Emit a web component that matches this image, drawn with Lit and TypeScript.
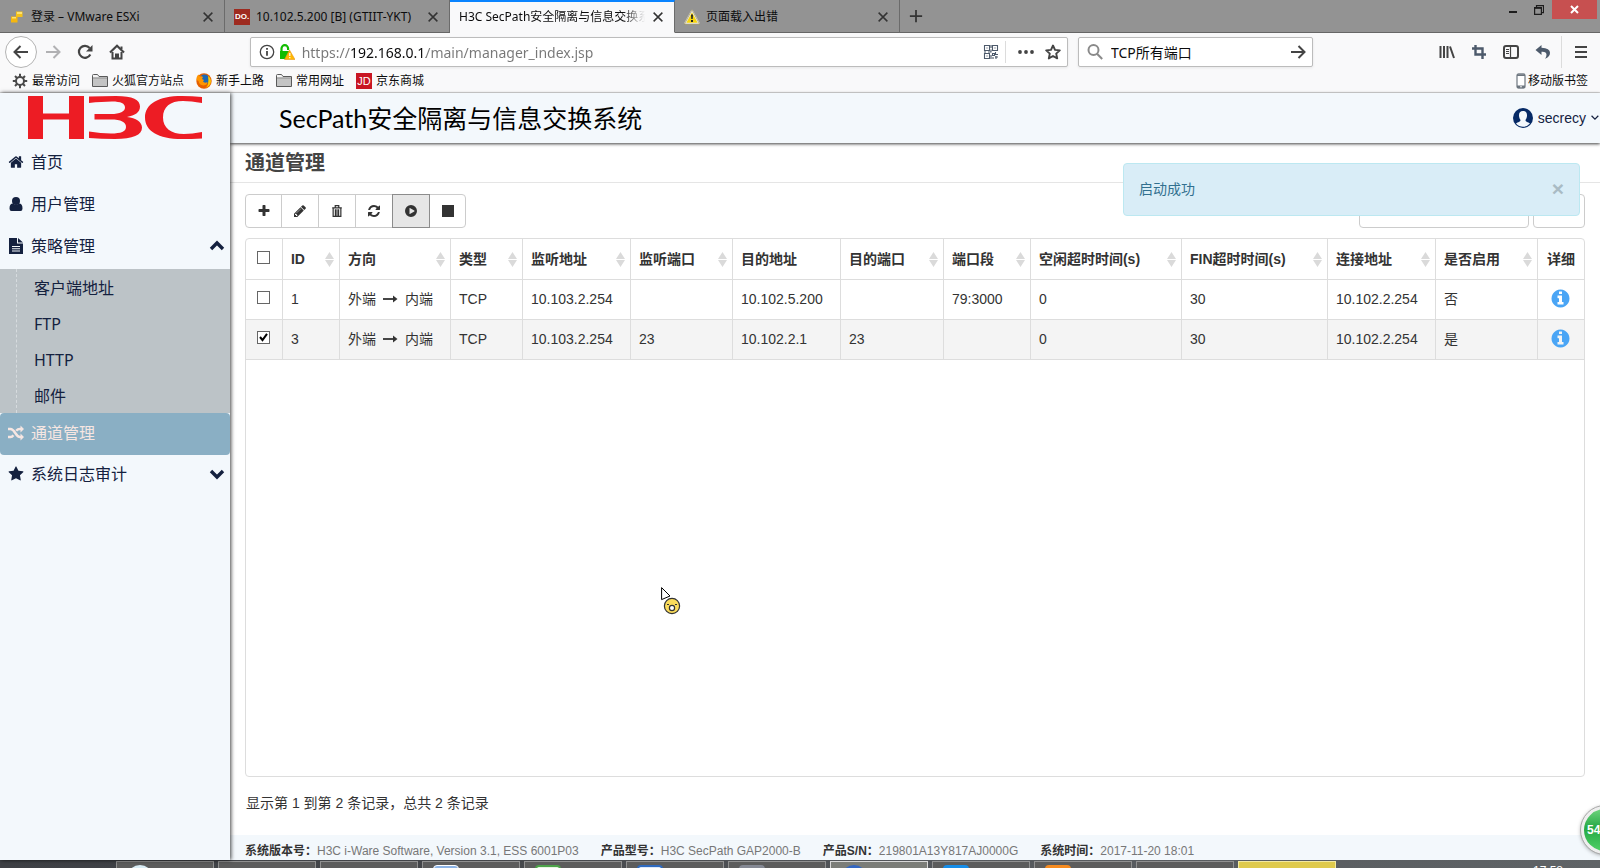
import { LitElement, html, css, svg } from "lit";
import { customElement, state } from "lit/decorators.js";
import { classMap } from "lit/directives/class-map.js";

const fa = (d: string) => html`<svg class="ico" viewBox="0 0 1792 1792" fill="currentColor" aria-hidden="true"><path d=${d}></path></svg>`;
const line = (body: unknown, box = "0 0 16 16") =>
  html`<svg class="ico" viewBox=${box} fill="none" stroke="currentColor" stroke-width="2" aria-hidden="true">${body}</svg>`;

const icons = {
  home: fa("M1472 992v480q0 26-19 45t-45 19h-384v-384h-256v384h-384q-26 0-45-19t-19-45v-480q0-1 .5-3t.5-3l575-474 575 474q1 2 1 6zm223-69l-62 74q-8 9-21 11h-3q-13 0-21-7l-692-577-692 577q-12 8-24 7-13-2-21-11l-62-74q-8-10-7-23.500t11-21.500l719-599q32-26 76-26t76 26l244 204v-195q0-14 9-23t23-9h192q14 0 23 9t9 23v408l219 182q10 8 11 21.500t-7 23.500z"),
  star: fa("M1728 647q0 22-26 48l-363 354 86 500q1 7 1 20 0 21-10.500 35.500t-30.500 14.500q-19 0-40-12l-449-236-449 236q-22 12-40 12-21 0-31.500-14.500t-10.500-35.500q0-6 2-20l86-500-364-354q-25-27-25-48 0-37 56-46l502-73 225-455q19-41 49-41t49 41l225 455 502 73q56 9 56 46z"),
  info: fa("M1152 1376v-160q0-14-9-23t-23-9h-96v-512q0-14-9-23t-23-9h-320q-14 0-23 9t-9 23v160q0 14 9 23t23 9h96v320h-96q-14 0-23 9t-9 23v160q0 14 9 23t23 9h448q14 0 23-9t9-23zm-128-896v-160q0-14-9-23t-23-9h-192q-14 0-23 9t-9 23v160q0 14 9 23t23 9h192q14 0 23-9t9-23zm640 416q0 209-103 385.500t-279.500 279.500-385.500 103-385.500-103-279.500-279.500-103-385.500 103-385.500 279.500-279.500 385.500-103 385.500 103 279.500 279.500 103 385.500z"),
  plus: fa("M1600 736v192q0 40-28 68t-68 28h-416v416q0 40-28 68t-68 28H800q-40 0-68-28t-28-68v-416H288q-40 0-68-28t-28-68V736q0-40 28-68t68-28h416V224q0-40 28-68t68-28h192q40 0 68 28t28 68v416h416q40 0 68 28t28 68z"),
  pencil: fa("M491 1536l91-91-235-235-91 91v107h128v128h107zm523-928q0-22-22-22-10 0-17 7l-542 542q-7 7-7 17 0 22 22 22 10 0 17-7l542-542q7-7 7-17zm-54-192l416 416-832 832h-416v-416zm683 96q0 53-37 90l-166 166-416-416 166-165q36-38 90-38 53 0 91 38l235 234q37 39 37 91z"),
  refresh: fa("M1639 1056q0 5-1 7-64 268-268 434.500t-478 166.500q-146 0-282.500-55t-243.500-157l-129 129q-19 19-45 19t-45-19-19-45v-448q0-26 19-45t45-19h448q26 0 45 19t19 45-19 45l-137 137q71 66 161 102t187 36q134 0 250-65t186-179q11-17 53-117 8-23 30-23h192q13 0 22.500 9.500t9.500 22.500zm25-800v448q0 26-19 45t-45 19h-448q-26 0-45-19t-19-45 19-45l138-138q-148-137-349-137-134 0-250 65t-186 179q-11 17-53 117-8 23-30 23h-199q-13 0-22.500-9.500t-9.500-22.500v-7q65-268 270-434.500t480-166.500q146 0 284 55.500t245 156.500l130-129q19-19 45-19t45 19 19 45z"),
  play: fa("M896 128a768 768 0 1 0 0 1536a768 768 0 1 0 0-1536zM704 544q0-52 48-30l560 326q32 20 32 56t-32 56l-560 326q-48 22-48-30z"),
  stop: fa("M128 128h1536v1536h-1536z"),
  user: line(svg`<circle cx="8" cy="5" r="4" fill="currentColor" stroke="none"/><path d="M1.500 12.500q0-5 3.500-5 3 2.500 6 0 3.500 0 3.500 5 0 2.500-2 2.500h-9q-2 0-2-2.500z" fill="currentColor" stroke="none"/>`),
  file: line(svg`<path d="M1 0h8v5.500h6V16H1zM10 0l5 4.500h-5zM4 8v1h8V8zM4 10.300v1h8v-1zM4 12.600v1h8v-1z" fill="currentColor" fill-rule="evenodd" stroke="none"/>`),
  shuffle: line(svg`<path d="M0 4h2.500C7 4 7.500 12 12 12h1M0 12h2.500q1.700 0 2.900-1.700M8.200 5.700Q9.600 4 12 4h1" stroke-width="2.400"/><path d="M12.500 .5L16 4l-3.500 3.500zM12.500 8.500L16 12l-3.500 3.500z" fill="currentColor" stroke="none"/>`),
  up: line(svg`<path d="M2 11l6-6 6 6" stroke-width="3.400"/>`),
  down: line(svg`<path d="M2 5l6 6 6-6" stroke-width="3.400"/>`),
  trash: line(svg`<path d="M2.500 4.500h11M6 4V1.800h4V4M3.600 5v9.200h8.800V5M6.200 6v7.500M8 6v7.500M9.800 6v7.500" stroke-width="1.400"/>`),
  arrow: line(svg`<path d="M0 7h11" stroke-width="1.800"/><path d="M10 3.500l4.500 3.500-4.500 3.500z" fill="currentColor" stroke="none"/>`, "0 0 15 14"),
  close: line(svg`<path d="M3 3l10 10M13 3L3 13" stroke-width="1.700"/>`),
  newTab: line(svg`<path d="M8 1v14M1 8h14"/>`),
  back: line(svg`<path d="M15 8H2M7.500 2L1.500 8l6 6"/>`),
  forward: line(svg`<path d="M1 8h13M8.500 2l6 6-6 6"/>`),
  reload: line(svg`<path d="M13.300 10.500A6 6 0 1 1 12.600 4" stroke-width="2.200"/><path d="M15.500 1v6.500H9z" fill="currentColor" stroke="none"/>`),
  house: line(svg`<path d="M1 8.500L8 1.800l7 6.700" stroke-width="2.200"/><path d="M3.500 8v6.500h9V8M7 14.500v-4h2v4M12.500 5V2.500" stroke-width="2"/>`),
  infoRing: line(svg`<circle cx="8" cy="8" r="6.700" stroke-width="1.300"/><path d="M8 7v4.800M8 4v1.800" stroke-width="1.800"/>`),
  lock: html`<svg class="ico" viewBox="0 0 16 16" aria-hidden="true"><path d="M2.500 8V4.500a3.300 3.300 0 0 1 6.600 0V6" fill="none" stroke="#12bc00" stroke-width="2.200"/><path d="M1 7h9v8H1z" fill="#12bc00"/><path d="M10.500 6L16 15.500H5.500z" fill="#ffb800" stroke="#e8941a" stroke-width=".6"/><path d="M10.200 9h1.200v3h-1.200zM10.200 13h1.200v1.300h-1.200z" fill="#fff"/></svg>`,
  qr: line(svg`<path d="M1.500 1.500h5v5h-5zM9.500 1.500h5v5h-5zM1.500 9.500h5v5h-5zM4 3.500v1M12 3.500v1M4 11.500v1M8 1v3M8 5.500V8H5M1 8h2M9.500 9.500h2v2h-2zM12.500 8v2.500h2.500M13 12v3M10 13v2M12 13h3M8 11v4" stroke-width="1.100"/>`),
  dots: line(svg`<circle cx="2" cy="8" r="1.900" fill="currentColor" stroke="none"/><circle cx="8" cy="8" r="1.900" fill="currentColor" stroke="none"/><circle cx="14" cy="8" r="1.900" fill="currentColor" stroke="none"/>`),
  starRing: line(svg`<path d="M8 1.500l2 4.400 4.800.5-3.600 3.200 1 4.800L8 12l-4.200 2.400 1-4.800L1.200 6.400 6 5.900z" stroke-linejoin="round" stroke-width="1.900"/>`),
  magnifier: line(svg`<circle cx="6.500" cy="6" r="5"/><path d="M10 9.800l5.200 5.200"/>`),
  library: line(svg`<path d="M1.500 2v12M5 2v12M8.500 2v12M11 2.500l4 11.500"/>`),
  crop: line(svg`<path d="M4.500 1v9.500H15M1 4.500h10.500V15" stroke-width="2.400"/>`),
  panel: line(svg`<rect x="1" y="2" width="14" height="12" rx="2"/><path d="M7.500 2v12M3 5.500h3M3 7.500h3M3 9.500h3" stroke-width="1.200"/>`),
  undo: line(svg`<path d="M6.500 1L.5 6l6 5V7.800q5-.4 5 3 0 2-1.500 4 5-1.800 5-6 0-4.600-8.500-5z" fill="currentColor" stroke="none"/>`),
  menu: line(svg`<path d="M2 3h12M2 8h12M2 13h12"/>`),
  gear: line(svg`<circle cx="8" cy="8" r="4"/><path d="M8 4V.8M8 12v3.200M4 8H.8M12 8h3.200M5.200 5.200L3 3M10.800 10.800L13 13M5.200 10.800L3 13M10.800 5.200L13 3"/>`),
  folder: html`<svg class="ico" viewBox="0 0 16 16" aria-hidden="true"><path d="M.5 13.500v-11q0-1 1-1h4l1.500 2h8.500v10z" fill="#f4f4f4" stroke="#5a5a5a"/><path d="M1 5.500h14V13H1z" fill="#c4c4c4"/><path d="M1 5h14" stroke="#777"/></svg>`,
  fox: html`<svg class="ico" viewBox="0 0 16 16" aria-hidden="true"><circle cx="8" cy="8" r="7.700" fill="#e66000"/><circle cx="8.500" cy="6.500" r="5" fill="#1c69b5"/><path d="M.5 7Q.3 3.500 2.200 1.500L4 3.500q2-.6 3 .5L6 6l2 1-1 1.500q1.500 2 4.500.5 0 3-4 3.500Q3 12 2.500 8z" fill="#ff9500"/><path d="M12 3q4 3 2.500 7.500-1.500 3.500-5 4.500 4-3 2.500-12z" fill="#ffcb00"/></svg>`,
  vm: html`<svg class="ico" viewBox="0 0 16 16" aria-hidden="true"><path d="M7 2.500h6.500V8H7z" fill="#f5c21b"/><path d="M2 7.500h6.500v6H2z" fill="#f5b70f"/><path d="M8 3h5v2H8zM3 8h4v1.500H3z" fill="#ffe36e"/></svg>`,
  warn: html`<svg class="ico" viewBox="0 0 16 16" aria-hidden="true"><path d="M8 1.500L15 14.500H1z" fill="#f7d60c" stroke="#e9e9e9" stroke-width="1.600" stroke-linejoin="round"/><path d="M8 .8L15.600 15.200H.4z" fill="none" stroke="#8a7a2a" stroke-width=".5"/><path d="M7 5.500h2L8.700 10H7.300zM7 11h2v2H7z" fill="#222"/></svg>`,
  phone: html`<svg class="ico" viewBox="0 0 10 16" aria-hidden="true"><rect x="1" y="1" width="8" height="14" rx="1.500" fill="#fff" stroke="#7a828a" stroke-width="1.300"/><path d="M1 1.500h8V3H1zM1 12.500h8V15H1z" fill="#6c757e"/><circle cx="5" cy="13.800" r=".8" fill="#fff"/></svg>`,
  avatar: html`<svg class="ico" viewBox="0 0 20 20" aria-hidden="true"><circle cx="10" cy="10" r="10" fill="#062a66"/><path d="M10 3c3 0 4.200 2 4 5-.2 2-1 3-1.500 4 0 2 2.500 2 4.500 3.500Q14 18.800 10 18.800T3 15.500C5 14 7.500 14 7.500 12 7 11 6.200 10 6 8c-.2-3 1-5 4-5z" fill="#f3f8fc"/></svg>`,
  thin: line(svg`<path d="M1 5l6 6 6-6" stroke-width="2.200"/>`),
  minimize: line(svg`<path d="M1 7h8" stroke-width="2"/>`, "0 0 10 10"),
  restore: line(svg`<path d="M.6 2.600h6.800v6.800H.6zM2.500 2.500V.6h7v7H8" stroke-width="1.200"/><path d="M0 3h8" stroke-width="1.600"/>`, "0 0 10 10"),
  quit: line(svg`<path d="M1 1l7 7M8 1L1 8" stroke-width="2"/>`, "0 0 9 9"),
};

interface Row { id: number; type: string; listen: string; listenPort: string; target: string; targetPort: string; range: string; idle: string; fin: string; conn: string; on: string; checked: boolean; }

const columns: Array<[string, number, boolean]> = [
  ["ID", 57, true], ["方向", 111, true], ["类型", 72, true], ["监听地址", 108, true], ["监听端口", 102, true],
  ["目的地址", 108, false], ["目的端口", 103, true], ["端口段", 87, true], ["空闲超时时间(s)", 151, true],
  ["FIN超时时间(s)", 146, true], ["连接地址", 108, true], ["是否启用", 102, true], ["详细", 47, false],
];
const total = 1338;

@customElement("app-root")
export class AppRoot extends LitElement {
  @state() private rows: Row[] = [
    { id: 1, type: "TCP", listen: "10.103.2.254", listenPort: "", target: "10.102.5.200", targetPort: "", range: "79:3000", idle: "0", fin: "30", conn: "10.102.2.254", on: "否", checked: false },
    { id: 3, type: "TCP", listen: "10.103.2.254", listenPort: "23", target: "10.102.2.1", targetPort: "23", range: "", idle: "0", fin: "30", conn: "10.102.2.254", on: "是", checked: true },
  ];
  @state() private alertOpen = true;

  static styles = css`
    * { box-sizing: border-box; }
    :host { display: flex; flex-direction: column; position: relative; height: 100vh; overflow: hidden; background: #fff; color: #333; font: 14px/20px "Liberation Sans", "Noto Sans CJK SC", sans-serif; }
    button, input { font: inherit; color: inherit; margin: 0; padding: 0; border: 0; background: none; }
    button { display: inline-flex; align-items: center; justify-content: center; flex: none; }
    a { color: inherit; text-decoration: none; }
    .ico { display: block; flex: none; width: 16px; height: 16px; }
    .ui { font-family: "Noto Sans", "Noto Sans CJK SC", sans-serif; color: #0c0c0d; }

    .tabs { display: flex; flex: none; height: 33px; background: #939393; border-bottom: 1px solid #666; }
    .tab { display: flex; align-items: center; width: 225px; height: 33px; padding: 2px 9px 0 9px; border-right: 1px solid #6b6b6b; border-bottom: 1px solid #666; font-size: 12px; line-height: 20px; gap: 6px; }
    .tab .name { flex: 1; overflow: hidden; white-space: nowrap; }
    .tab button { color: #333; }
    .tab button .ico { width: 14px; height: 14px; }
    .tab.active { background: #f9f9fa; border-top: 2px solid #0a84ff; border-bottom-color: #f9f9fa; padding-top: 0; }
    .tab.active .name { mask-image: linear-gradient(90deg, #000 88%, transparent); }
    .do { width: 16px; height: 16px; background: #9e2b20; color: #fff; font: bold 8px/16px "Liberation Sans", sans-serif; text-align: center; }
    .add { width: 32px; color: #333; }
    .add .ico { width: 14px; height: 14px; }
    .win { display: flex; margin-left: auto; align-items: flex-start; color: #1d1d1d; }
    .win button { height: 19px; width: 26px; }
    .win .ico { width: 10px; height: 10px; }
    .win .quit { width: 45px; background: #c75050; color: #fff; margin-right: 3px; }
    .win .quit .ico { width: 9px; height: 9px; }

    .nav { display: flex; flex: none; align-items: center; height: 37px; padding: 0 3px 0 5px; background: #f9f9fa; color: #444; }
    .nav .back { width: 32px; height: 32px; border: 1px solid #b4b4b4; border-radius: 50%; background: #fff; }
    .nav .tool { width: 32px; height: 32px; }
    .dim { color: #b1b1b3; }
    .box { display: flex; align-items: center; height: 30px; margin-top: 1px; border: 1px solid #bcbcbc; border-radius: 2px; background: #fff; box-shadow: 0 1px 3px rgba(0, 0, 0, .08); }
    .url { flex: 1; margin-left: 117px; padding: 0 6px 0 8px; }
    .url input { flex: 1; min-width: 0; height: 26px; margin-left: 7px; font-size: 14px; color: transparent; background: linear-gradient(90deg, #777 48px, #0c0c0d 48px, #0c0c0d 124px, #777 124px); -webkit-background-clip: text; background-clip: text; }
    .url .sep { height: 22px; margin: 0 12px 0 6px; }
    .url .more { margin-right: 11px; }
    .sep { width: 1px; background: #dcdcdc; }
    .find { width: 235px; margin-left: 10px; margin-right: 118px; padding: 0 6px 0 8px; }
    .mag { color: #8a8a8a; }
    .find input { flex: 1; min-width: 0; margin-left: 8px; font-size: 14px; height: 26px; color: #0c0c0d; }
    .nav .sep.tall { height: 32px; margin: 0 3px 0 2px; }
    .nav .end { display: flex; align-items: center; }
    .slate { color: #4d5a6b; }

    .marks { display: flex; flex: none; align-items: center; height: 23px; padding: 0 12px; gap: 12px; background: #f9f9fa; border-bottom: 1px solid #dcdcdc; font-size: 12px; line-height: 20px; }
    .marks a { display: flex; align-items: center; gap: 4px; color: #0c0c0d; }
    .marks .ico { color: #4a4a4a; }
    .marks a:last-child { margin-left: auto; gap: 2px; }
    .marks a:last-child .ico { width: 10px; }
    .jd { width: 16px; height: 16px; background: #c91623; color: #fff; font: 11px/16px "Liberation Sans", sans-serif; text-align: center; }

    .page { display: flex; flex: 1; min-height: 0; }
    .side { position: relative; z-index: 2; flex: none; width: 230px; background: #f3f8fc; box-shadow: 1px 0 4px rgba(0, 0, 0, .75); font: 16px/36px "Noto Sans", "Noto Sans CJK SC", sans-serif; color: #14213f; }
    .logo { display: block; width: 174px; height: 43px; margin: 3px 0 4px 28px; }
    .item { display: flex; align-items: center; height: 42px; padding: 0 5px 4px 8px; gap: 7px; }
    .item.fold .ico:last-child { margin-left: auto; }
    .item.active { background: #8aafc4; color: #f6e6e2; border-radius: 4px; padding-bottom: 3px; }
    .sub { position: relative; background: #bcc3c7; }
    .sub::before { content: ""; position: absolute; inset: 0 auto 0 16px; border-left: 1px dashed #d6dbde; }
    .sub a { display: block; padding-left: 34px; height: 36px; padding-top: 1px; }

    .main { display: flex; flex-direction: column; flex: 1; min-width: 0; }
    .banner { position: relative; z-index: 1; display: flex; align-items: center; justify-content: space-between; flex: none; height: 50px; padding: 0 0 1px 49px; background: #f3f8fc; box-shadow: 0 1px 3px rgba(0, 0, 0, .75); }
    .banner h1 { margin: 0; font: 25px/36px "Lato", "Noto Sans CJK SC", sans-serif; font-weight: 400; color: #000; }
    .who { gap: 5px; color: #14213f; }
    .who .ico { width: 20px; height: 20px; }
    .who .ico:last-child { width: 9px; height: 9px; }
    .head { flex: none; height: 40px; padding: 5px 15px 0; border-bottom: 1px solid #e5e5e5; }
    .head h2 { margin: 0; font: bold 20px/30px "Liberation Sans", "Noto Sans CJK SC", sans-serif; color: #444; }
    .tools { display: flex; flex: none; justify-content: space-between; padding: 11px 15px 10px; }
    .group { display: flex; }
    .group button { width: 38px; height: 34px; margin-right: -1px; border: 1px solid #ccc; background: #fff; }
    .group button:first-child { border-radius: 4px 0 0 4px; width: 37px; }
    .group button:last-child { border-radius: 0 4px 4px 0; margin: 0; width: 37px; }
    .group .on { position: relative; background: #e6e6e6; border-color: #8c8c8c; }
    .group .ico { width: 14px; height: 14px; }
    .filter { display: flex; gap: 4px; }
    .filter input { width: 170px; height: 34px; border: 1px solid #ccc; border-radius: 4px; padding: 0 12px; }
    .filter button { width: 52px; height: 34px; border: 1px solid #ccc; border-radius: 4px; }
    .grid { flex: 1; min-height: 0; margin: 0 15px; border: 1px solid #ddd; border-radius: 4px; }
    table { width: 100%; table-layout: fixed; border-collapse: separate; border-spacing: 0; }
    th, td { height: 40px; padding: 0 8px 2px; text-align: left; border-bottom: 1px solid #ddd; border-left: 1px solid #ddd; white-space: nowrap; }
    th { height: 41px; padding-bottom: 0; font-weight: bold; }
    th:first-child, td:first-child { border-left: 0; padding: 0 0 4px 11px; }
    th:last-child, td:last-child { text-align: center; padding-left: 6px; padding-right: 6px; }
    td:last-child .ico { width: 21px; height: 21px; color: #4aa5f5; }
    td:last-child button { vertical-align: middle; }
    tr.picked td { background: #f4f4f4; }
    .cell { display: flex; align-items: center; justify-content: space-between; margin-right: -3px; }
    .sort { width: 9px; height: 15px; display: block; }
    .dir { display: flex; align-items: center; gap: 7px; }
    .dir .ico { width: 15px; height: 14px; }
    .tick { appearance: none; display: block; width: 13px; height: 13px; border: 1px solid #666; background: #fff; }
    .tick:checked { background: #fff url("data:image/svg+xml,%3Csvg xmlns='http://www.w3.org/2000/svg' viewBox='0 0 11 11'%3E%3Cpath d='M2 5l2.500 3L9 1.800' fill='none' stroke='%23000' stroke-width='2'/%3E%3C/svg%3E") center / 11px; }
    .count { flex: none; padding: 16px 16px 22px; }
    .foot { display: flex; flex: none; gap: 22px; height: 25px; padding: 7px 15px 0; background: #f3f8fc; font-size: 12px; line-height: 18px; color: #777; white-space: nowrap; }
    .foot b { color: #333; }

    .alert { position: absolute; z-index: 3; right: 20px; top: 163px; width: 457px; height: 53px; display: flex; align-items: center; justify-content: space-between; padding: 0 15px 2px; border: 1px solid #bce8f1; border-radius: 4px; background: #d9edf7; color: #31708f; }
    .alert button { font: bold 21px/21px "Liberation Sans", sans-serif; color: #a9bbc4; }
    .ball { position: absolute; z-index: 4; right: -29px; top: 806px; width: 48px; height: 48px; padding-left: 3px; justify-content: flex-start; border: 3px solid #eee; outline: 1px solid #aaa; border-radius: 50%; background: linear-gradient(#6fd47e, #25a844 45%, #4fd065); box-shadow: 0 1px 4px rgba(0, 0, 0, .4); color: #fff; font: bold 12px/16px "Liberation Sans", sans-serif; }
    .pointer { position: absolute; z-index: 4; left: 661px; top: 587px; width: 20px; height: 28px; }

    .bar { display: flex; flex: none; height: 8px; padding: 1px 37px 0 116px; gap: 4px; overflow: hidden; background: linear-gradient(90deg, #3e4045 0, #44464a 30%, #55585c 60%, #5f6366); }
    .task { display: block; flex: none; width: 98px; height: 40px; padding-left: 10px; border: 1px solid #909090; background: #5c5c5c; }
    .task.lit { background: #7b7d78; border-color: #d8d8d8; }
    .task.gold { background: #dfca4d; border-color: #f3e9a0; }
    .task i { display: block; width: 26px; height: 26px; margin-top: 3px; border-radius: 4px 4px 0 0; }
    .task .t0 { background: #d9ecf5; border-radius: 50%; }
    .task .t1 { background: #8b8b8b; width: 20px; margin-top: 6px; }
    .task .t2 { background: #d6bd78; width: 15px; margin-top: 6px; }
    .task .t3 { background: #8db4e6; border: 1px solid #fff; }
    .task .t4 { background: #e6f5e0; border: 2px solid #4da34a; }
    .task .t5 { background: #dbe8f8; border: 2px solid #2e6ac0; }
    .task .t6 { background: #858994; }
    .task .t7 { background: #3467c2; border-radius: 50%; }
    .task .t8 { background: #168de8; }
    .task .t9 { background: #f68b1f; }
    .task .t10, .task .t11 { visibility: hidden; }
    .clock { margin-left: auto; color: #fff; font-size: 12px; line-height: 20px; }
  `;

  private toggle(row: Row) {
    this.rows = this.rows.map((r) => (r === row ? { ...r, checked: !r.checked } : r));
  }

  private tab(icon: unknown, name: string, active = false) {
    return html`<div class=${classMap({ tab: true, active })}>${icon}<span class="name">${name}</span><button aria-label="关闭标签页">${icons.close}</button></div>`;
  }

  private row(r: Row) {
    return html`<tr class=${classMap({ picked: r.checked })}>
      <td><input class="tick" type="checkbox" aria-label="选择 ${r.id}" .checked=${r.checked} @change=${() => this.toggle(r)}></td>
      <td>${r.id}</td>
      <td><span class="dir">外端${icons.arrow}内端</span></td>
      <td>${r.type}</td><td>${r.listen}</td><td>${r.listenPort}</td><td>${r.target}</td><td>${r.targetPort}</td>
      <td>${r.range}</td><td>${r.idle}</td><td>${r.fin}</td><td>${r.conn}</td><td>${r.on}</td>
      <td><button aria-label="详细">${icons.info}</button></td>
    </tr>`;
  }

  render() {
    return html`
      <div class="tabs ui">
        ${this.tab(icons.vm, "登录 – VMware ESXi")}
        ${this.tab(html`<span class="do">DO.</span>`, "10.102.5.200 [B] (GTIIT-YKT)")}
        ${this.tab("", "H3C SecPath安全隔离与信息交换系统", true)}
        ${this.tab(icons.warn, "页面载入出错")}
        <button class="add" aria-label="新标签页">${icons.newTab}</button>
        <div class="win">
          <button aria-label="最小化">${icons.minimize}</button>
          <button aria-label="还原">${icons.restore}</button>
          <button class="quit" aria-label="关闭">${icons.quit}</button>
        </div>
      </div>
      <div class="nav ui">
        <button class="back" aria-label="后退">${icons.back}</button>
        <button class="tool dim" aria-label="前进">${icons.forward}</button>
        <button class="tool" aria-label="刷新">${icons.reload}</button>
        <button class="tool" aria-label="主页">${icons.house}</button>
        <div class="box url">
          ${icons.infoRing}&nbsp;${icons.lock}
          <input aria-label="网址" spellcheck="false" value="https://192.168.0.1/main/manager_index.jsp">
          <button class="slate" aria-label="二维码">${icons.qr}</button>
          <span class="sep"></span>
          <button class="more" aria-label="页面操作">${icons.dots}</button>
          <button aria-label="收藏">${icons.starRing}</button>
        </div>
        <div class="box find">
          <span class="mag">${icons.magnifier}</span>
          <input aria-label="搜索" value="TCP所有端口">
          <button aria-label="搜索">${icons.forward}</button>
        </div>
        <div class="end">
          <button class="tool" aria-label="我的足迹">${icons.library}</button>
          <button class="tool slate" aria-label="截图">${icons.crop}</button>
          <button class="tool" aria-label="侧栏">${icons.panel}</button>
          <button class="tool slate" aria-label="撤销">${icons.undo}</button>
          <span class="sep tall"></span>
          <button class="tool" aria-label="菜单">${icons.menu}</button>
        </div>
      </div>
      <nav class="marks ui" aria-label="书签">
        <a href="#">${icons.gear}最常访问</a>
        <a href="#">${icons.folder}火狐官方站点</a>
        <a href="#">${icons.fox}新手上路</a>
        <a href="#">${icons.folder}常用网址</a>
        <a href="#"><span class="jd">JD</span>京东商城</a>
        <a href="#">${icons.phone}移动版书签</a>
      </nav>

      <div class="page">
        <nav class="side" aria-label="主菜单">
          <svg class="logo" viewBox="0 0 174 43" fill="#ed1c24" role="img" aria-label="H3C">
            <path d="M0 0h15v17.500h26V0h15v43H41V23.500H15V43H0z"/>
            <path d="M61 .5Q74 0 88 0c17 0 24 4 24 10.500 0 6-5 9-13 10.500 9 1 15 5 15 10.500C114 39 105 43 87 43q-14 0-26-1v-6.500q12 2 22 2c10 0 15-2 15-6.500 0-5-5-7.500-15-7.500H66.500V18H83c9 0 14-2.500 14-6.500 0-4-4-6-13-6q-10 0-23 1.500z"/>
            <path d="M174 1v6q-11-2-19-2c-13 0-20 6-20 16.500S143 38 156 38q8 0 18-2v6.500q-11 .5-20 .5c-24 0-37-8-37-21.500S130 0 154 0q10 0 20 1z"/>
          </svg>
          <a class="item" href="#">${icons.home}首页</a>
          <a class="item" href="#">${icons.user}用户管理</a>
          <a class="item fold" href="#">${icons.file}策略管理${icons.up}</a>
          <div class="sub">
            <a href="#">客户端地址</a><a href="#">FTP</a><a href="#">HTTP</a><a href="#">邮件</a>
          </div>
          <a class="item active" href="#">${icons.shuffle}通道管理</a>
          <a class="item fold" href="#">${icons.star}系统日志审计${icons.down}</a>
        </nav>
        <main class="main">
          <header class="banner">
            <h1>SecPath安全隔离与信息交换系统</h1>
            <button class="who">${icons.avatar}secrecy${icons.thin}</button>
          </header>
          <div class="head"><h2>通道管理</h2></div>
          <div class="tools">
            <div class="group">
              <button aria-label="新增">${icons.plus}</button>
              <button aria-label="编辑">${icons.pencil}</button>
              <button aria-label="删除">${icons.trash}</button>
              <button aria-label="刷新">${icons.refresh}</button>
              <button class="on" aria-label="启动">${icons.play}</button>
              <button aria-label="停止">${icons.stop}</button>
            </div>
            <div class="filter"><input aria-label="过滤"><button aria-label="查询"></button></div>
          </div>
          <div class="grid">
            <table>
              <colgroup>
                <col style="width:${(36 / total) * 100}%">
                ${columns.map(([, w]) => html`<col style="width:${(w / total) * 100}%">`)}
              </colgroup>
              <thead><tr>
                <th><input class="tick" type="checkbox" aria-label="全选"></th>
                ${columns.map(([name, , sort]) => html`<th>${sort
                  ? html`<span class="cell">${name}<svg class="sort" viewBox="0 0 9 15" fill="#dadada" aria-hidden="true"><path d="M4.500 0L9 7H0zM0 8h9l-4.500 7z"/></svg></span>`
                  : name}</th>`)}
              </tr></thead>
              <tbody>${this.rows.map((r) => this.row(r))}</tbody>
            </table>
          </div>
          <div class="count">显示第 1 到第 2 条记录，总共 2 条记录</div>
          <footer class="foot">
            <span><b>系统版本号：</b>H3C i-Ware Software, Version 3.1, ESS 6001P03</span>
            <span><b>产品型号：</b>H3C SecPath GAP2000-B</span>
            <span><b>产品S/N：</b>219801A13Y817AJ0000G</span>
            <span><b>系统时间：</b>2017-11-20 18:01</span>
          </footer>
        </main>
      </div>
      <div class="bar">
        ${Array.from({ length: 12 }, (_, i) => html`<span class=${classMap({ task: true, lit: i === 7, gold: i === 11 })}><i class="t${i}"></i></span>`)}
        <span class="clock">17:58</span>
      </div>

      ${this.alertOpen ? html`<div class="alert" role="alert">启动成功<button aria-label="关闭" @click=${() => (this.alertOpen = false)}>×</button></div>` : ""}
      <button class="ball">54</button>
      <svg class="pointer" viewBox="0 0 20 28" aria-hidden="true">
        <path d="M.6.600v12L9 9z" fill="#fff" stroke="#000"/>
        <circle cx="11" cy="19" r="7.600" fill="#fbdc5b" stroke="#333" stroke-width="1.200"/>
        <circle cx="11" cy="21" r="2.600" fill="#fff" stroke="#333" stroke-width="1.200"/>
        <path d="M6 17.500h2M14 17.500h2" stroke="#333"/>
      </svg>
    `;
  }
}
